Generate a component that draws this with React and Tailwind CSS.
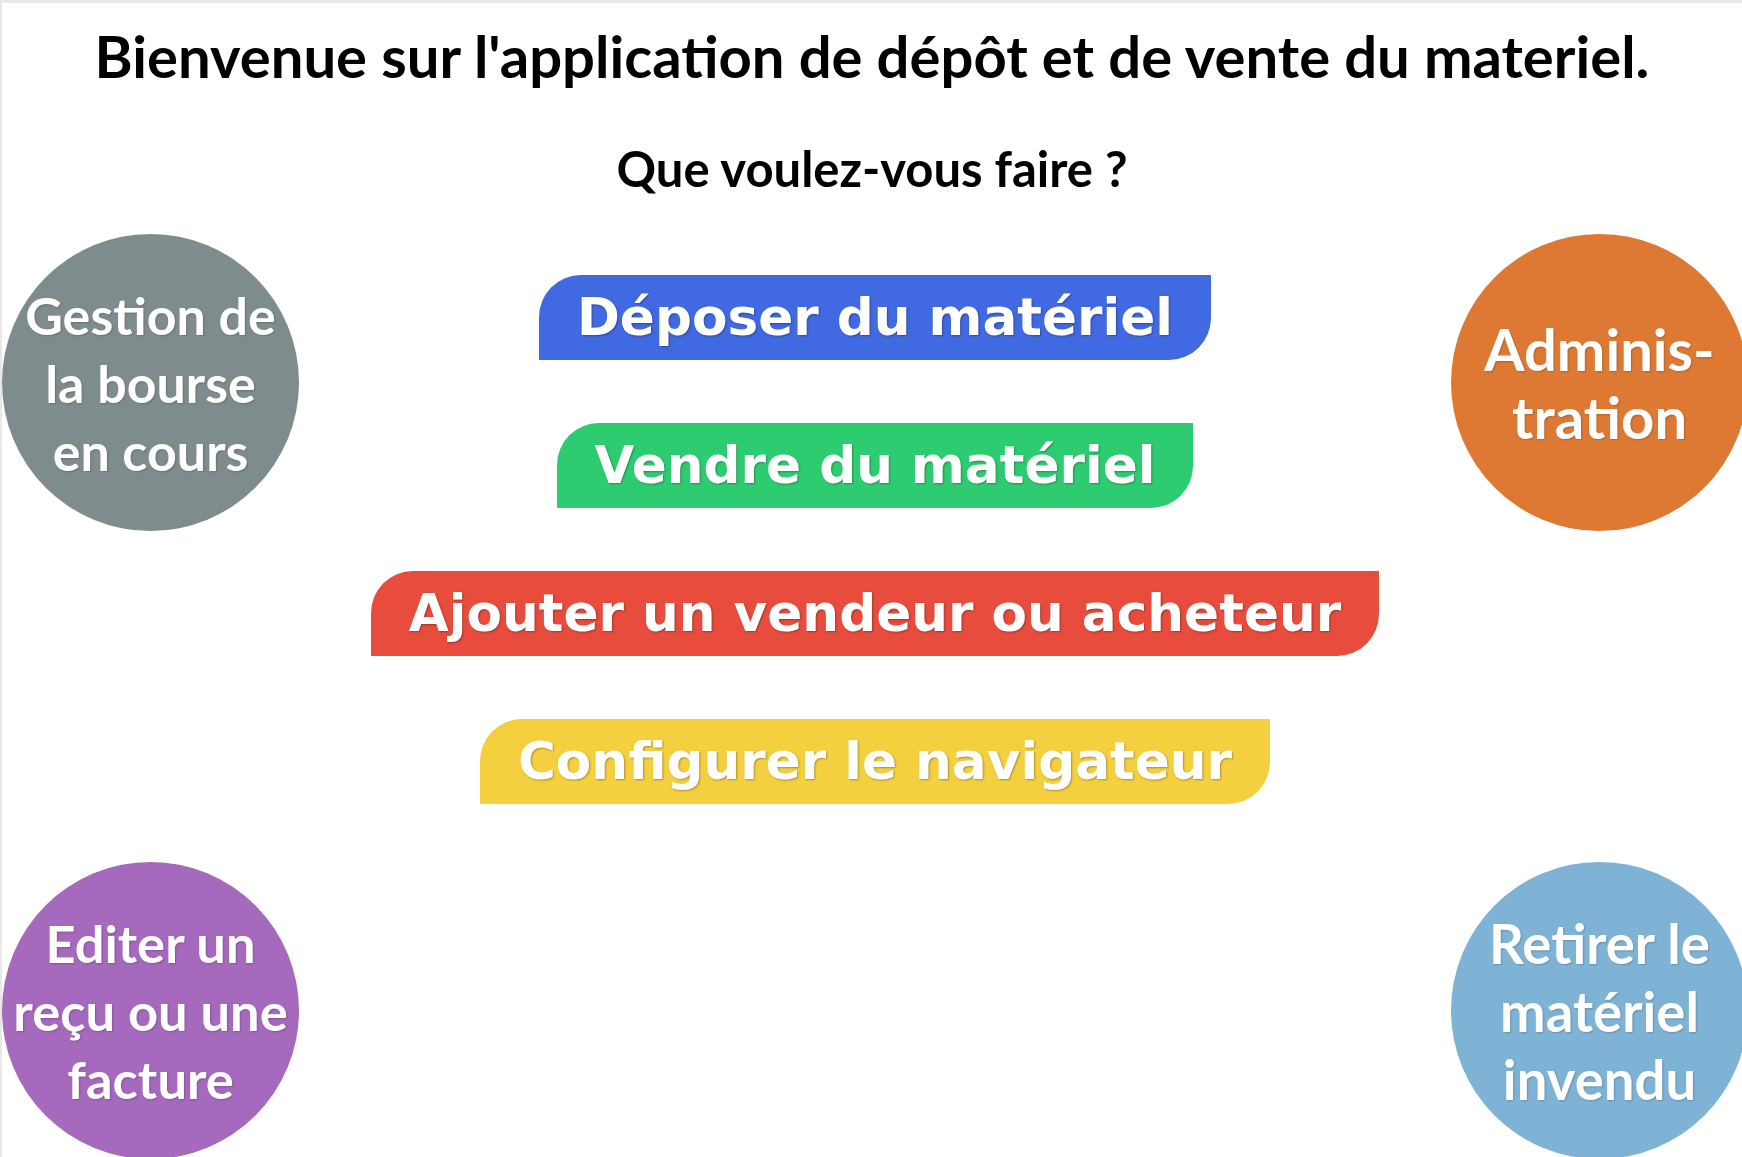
const actions = [
  { label: "Déposer du matériel", color: "bg-[#4169e1]" },
  { label: "Vendre du matériel", color: "bg-[#2ecc71]" },
  { label: "Ajouter un vendeur ou acheteur", color: "bg-[#e74c3c]" },
  { label: "Configurer le navigateur", color: "bg-[#f4d03f]" },
];

function Bubble({ lines, color, size }) {
  return (
    <button
      type="button"
      className={`flex h-[297px] w-[297px] shrink-0 items-center justify-center rounded-full text-center font-bold leading-[68px] text-white [text-shadow:1px_1px_2px_rgba(0,0,0,0.2)] ${color} ${size}`}
    >
      <span>
        {lines.map((line) => (
          <span key={line} className="block whitespace-nowrap">
            {line}
          </span>
        ))}
      </span>
    </button>
  );
}

function ActionButton({ label, color }) {
  return (
    <button
      type="button"
      className={`flex h-[85px] items-center whitespace-nowrap rounded-tl-[42px] rounded-br-[42px] px-[38px] font-['DejaVu_Sans',sans-serif] text-[51.7px] font-bold text-white [text-shadow:1px_1px_2px_rgba(0,0,0,0.3)] ${color}`}
    >
      {label}
    </button>
  );
}

export default function App() {
  return (
    <div className="min-h-screen overflow-hidden border-l-[2px] border-t-[3px] border-[#e8e8e8] bg-white font-['Lato',sans-serif] text-black">
      {/* header */}
      <h1 className="whitespace-nowrap pt-[24px] text-center text-[58px] font-bold leading-none">
        Bienvenue sur l'application de dépôt et de vente du materiel.
      </h1>
      <p className="mt-[59px] text-center text-[49px] font-bold leading-none">
        Que voulez-vous faire ?
      </p>

      {/* body */}
      <div className="mt-[41px] flex">
        <div className="flex w-[297px] shrink-0 flex-col gap-[331px]">
          <Bubble color="bg-[#7f8c8d]" size="text-[52px]" lines={["Gestion de", "la bourse", "en cours"]} />
          <Bubble color="bg-[#a569bd]" size="text-[52.5px]" lines={["Editer un", "reçu ou une", "facture"]} />
        </div>

        <div className="flex w-[1152px] shrink-0 flex-col items-center gap-[63px] pt-[41px]">
          {actions.map((a) => (
            <ActionButton key={a.label} label={a.label} color={a.color} />
          ))}
        </div>

        <div className="flex w-[297px] shrink-0 flex-col gap-[331px]">
          <Bubble color="bg-[#de7934]" size="text-[58px]" lines={["Adminis-", "tration"]} />
          <Bubble color="bg-[#7fb3d5]" size="text-[54.5px]" lines={["Retirer le", "matériel", "invendu"]} />
        </div>
      </div>
    </div>
  );
}
